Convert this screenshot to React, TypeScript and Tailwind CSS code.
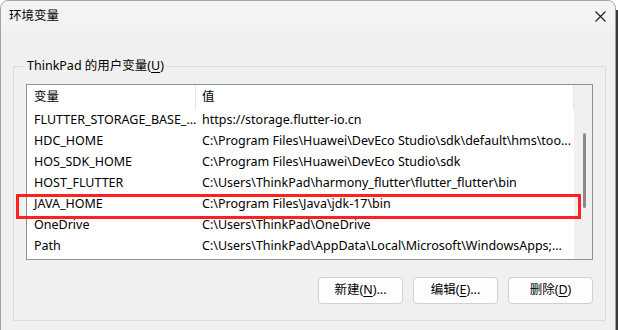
import React from "react";

const rows: [string, string][] = [
  ["FLUTTER_STORAGE_BASE_...", "https://storage.flutter-io.cn"],
  ["HDC_HOME", "C:\\Program Files\\Huawei\\DevEco Studio\\sdk\\default\\hms\\too..."],
  ["HOS_SDK_HOME", "C:\\Program Files\\Huawei\\DevEco Studio\\sdk"],
  ["HOST_FLUTTER", "C:\\Users\\ThinkPad\\harmony_flutter\\flutter_flutter\\bin"],
  ["JAVA_HOME", "C:\\Program Files\\Java\\jdk-17\\bin"],
  ["OneDrive", "C:\\Users\\ThinkPad\\OneDrive"],
  ["Path", "C:\\Users\\ThinkPad\\AppData\\Local\\Microsoft\\WindowsApps;..."],
];

function Btn({ pre, key1, post }: { pre: string; key1: string; post: string }) {
  return (
    <button className="w-[85px] h-[27px] rounded-[4px] border border-[#d0d0d0] bg-[#fdfdfd] text-[12.5px] text-black flex items-center justify-center">
      {pre}(<span className="underline underline-offset-2">{key1}</span>){post}
    </button>
  );
}

export default function App() {
  return (
    <div
      className="relative w-[618px] h-[330px] overflow-hidden bg-white flex text-black"
      style={{ fontFamily: '"Microsoft YaHei UI", "Noto Sans", "Noto Sans CJK SC", sans-serif' }}
    >
      <div className="w-[616px] h-[340px] shrink-0 rounded-t-[8px] border border-[#a3a3a3] bg-[#f0f0f0] flex flex-col">
        <div className="h-[30px] shrink-0 rounded-t-[8px] bg-[#f3f3f3] flex items-center justify-between pl-[8px] pr-[8px]">
          <span className="text-[12.5px] leading-none">环境变量</span>
          <svg width="11" height="11" viewBox="0 0 11 11" className="mr-[1px]">
            <path d="M0.5 0.5 L10.5 10.5 M10.5 0.5 L0.5 10.5" stroke="#1c1c1c" strokeWidth="1.1" fill="none" />
          </svg>
        </div>
        <fieldset className="mt-[26px] ml-[12px] w-[593px] h-[264px] border border-[#dcdcdc] px-[12px] pb-0 flex flex-col">
          <legend className="ml-[-1px] px-[2px] text-[12.5px] leading-[18px]">
            ThinkPad 的用户变量(<span className="underline underline-offset-2">U</span>)
          </legend>
          <div className="mt-[9px] w-[567px] h-[176px] border border-[#8b9099] bg-white flex text-[12.5px]">
            <div className="flex-1 flex flex-col">
              <div className="h-[25px] flex items-stretch border-r border-[#e5e5e5]">
                <div className="w-[169px] pl-[7px] flex items-center border-r border-[#e5e5e5]">变量</div>
                <div className="flex-1 pl-[6px] flex items-center">值</div>
              </div>
              {rows.map(([n, v]) => (
                <div key={n} className="h-[21px] flex items-center whitespace-nowrap">
                  <div className="w-[170px] pl-[7px] shrink-0">{n}</div>
                  <div className="pl-[5px]">{v}</div>
                </div>
              ))}
            </div>
            <div className="w-[18px] bg-[#f0f0f0] flex justify-center pt-[48px]">
              <div className="w-[3px] h-[75px] rounded-full bg-[#8a8a8a] ml-[2px]" />
            </div>
          </div>
          <div className="mt-[17px] flex justify-end gap-[10px] pr-0 w-[567px]">
            <Btn pre="新建" key1="N" post="..." />
            <Btn pre="编辑" key1="E" post="..." />
            <Btn pre="删除" key1="D" post="" />
          </div>
        </fieldset>
      </div>
      <div className="w-[2px] mt-[10px] bg-[#3a3a3a]" />
      <div className="absolute left-[16px] top-[194px] w-[565px] h-[25px] border-[3px] border-[#ff2020] pointer-events-none" />
    </div>
  );
}
